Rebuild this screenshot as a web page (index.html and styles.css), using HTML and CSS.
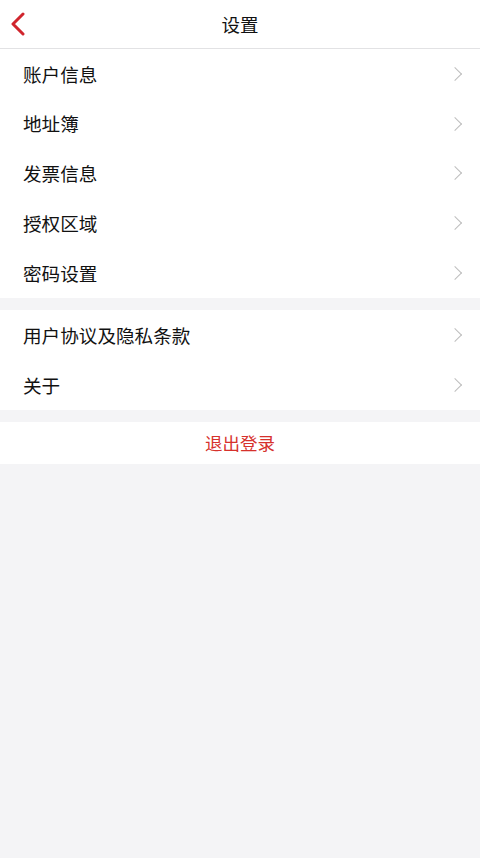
FILE: index.html
```html
<!DOCTYPE html>
<html lang="zh-CN">
<head>
<meta charset="utf-8">
<title>设置</title>
<link rel="stylesheet" href="styles.css">
</head>
<body>
<div class="page">
  <header class="header">
    <span class="back">
      <svg width="16" height="24" viewBox="0 0 16 24"><path d="M13 2 L3 12 L13 22" fill="none" stroke="#d0252d" stroke-width="3" stroke-linecap="round" stroke-linejoin="round"/></svg>
    </span>
    <h1 class="title">设置</h1>
  </header>
  <ul class="group">
    <li class="row"><span>账户信息</span><i class="arrow"></i></li>
    <li class="row"><span>地址簿</span><i class="arrow"></i></li>
    <li class="row"><span>发票信息</span><i class="arrow"></i></li>
    <li class="row"><span>授权区域</span><i class="arrow"></i></li>
    <li class="row"><span>密码设置</span><i class="arrow"></i></li>
  </ul>
  <ul class="group">
    <li class="row"><span>用户协议及隐私条款</span><i class="arrow"></i></li>
    <li class="row"><span>关于</span><i class="arrow"></i></li>
  </ul>
  <div class="logout">退出登录</div>
</div>
</body>
</html>
```
FILE: styles.css
```css
* { box-sizing: border-box; }
html, body { margin: 0; padding: 0; }
body {
  background: #f4f4f6;
  font-family: "Noto Sans CJK SC", "Liberation Sans", sans-serif;
  color: #111;
  width: 480px;
  min-height: 858px;
}
.page { display: flex; flex-direction: column; }
.header {
  position: relative;
  height: 49px;
  background: #fff;
  border-bottom: 1px solid #e2e2e4;
  display: flex;
  align-items: center;
  justify-content: center;
}
.back {
  position: absolute;
  left: 10px;
  top: 12px;
  width: 16px;
  height: 24px;
  display: block;
}
.back svg { display: block; }
.title {
  margin: 0;
  font-size: 18.5px;
  font-weight: 400;
  line-height: 1;
  color: #111;
}
.group {
  list-style: none;
  margin: 0 0 12px 0;
  padding: 0;
  background: #fff;
}
.row {
  height: 50px;
  padding: 0 18px 0 23px;
  display: flex;
  align-items: center;
  justify-content: space-between;
  font-size: 18.6px;
  line-height: 1;
}
.group:first-of-type .row { height: 49.8px; }
.arrow {
  width: 10px;
  height: 10px;
  border-top: 1.6px solid #bdbdbd;
  border-right: 1.6px solid #bdbdbd;
  transform: rotate(45deg);
  margin-right: 2px;
}
.logout {
  height: 42px;
  background: #fff;
  display: flex;
  align-items: center;
  justify-content: center;
  font-size: 17.5px;
  color: #d6312c;
}
```
